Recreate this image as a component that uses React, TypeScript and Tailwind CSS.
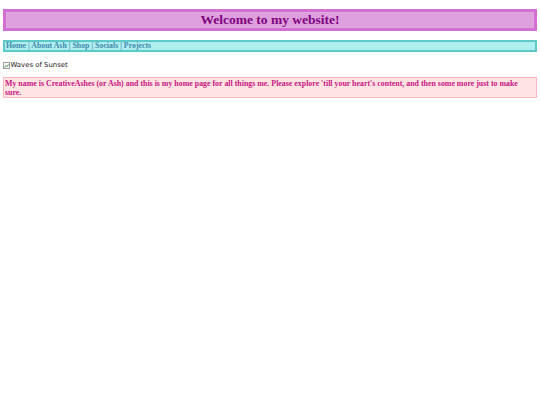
export default function App() {
  return (
    <div className="w-[540px] h-[405px] bg-white px-[3px] pt-[9px]" style={{ fontFamily: '"Liberation Serif", serif' }}>
      <h1 className="h-[22px] border-[3px] border-[#d36fd2] bg-[#dda0dd] shadow-[inset_0_0_0_1px_#e2a8e2] text-center text-[13.5px] leading-[16px] font-bold text-[#800080]">
        Welcome to my website!
      </h1>
      <nav className="mt-[9px] h-[12px] border-2 border-[#5cc8c8] bg-[#afeeee] px-[1px] text-[7.85px] leading-[8px] font-bold text-[#3f8cae]">
        Home | About Ash | Shop | Socials | Projects
      </nav>
      <div className="mt-[9px] flex items-center h-[9px] text-[6.9px] leading-[9px] text-[#222]" style={{ fontFamily: '"DejaVu Sans", sans-serif' }}>
        <svg width="7" height="7" viewBox="0 0 7 7" className="mr-[0.5px]">
          <rect x="0.5" y="0.5" width="6" height="6" fill="#f4f4f4" stroke="#a0a0a0" strokeWidth="1" />
          <path d="M1.5 5.5 L3 3.5 L4 4.5 L5.5 2.5" stroke="#4a9a4a" strokeWidth="1" fill="none" />
        </svg>
        <span>Waves of Sunset</span>
      </div>
      <p className="mt-[7px] h-[21px] border-[1.5px] border-[#fbb7c4] bg-[#ffe4e1] pl-[1px] pr-[12px] pt-[1px] text-[7.9px] leading-[9px] font-bold text-[#c71585]">
        My name is CreativeAshes (or Ash) and this is my home page for all things me. Please explore 'till your heart's content, and then some more just to make sure.
      </p>
    </div>
  );
}
